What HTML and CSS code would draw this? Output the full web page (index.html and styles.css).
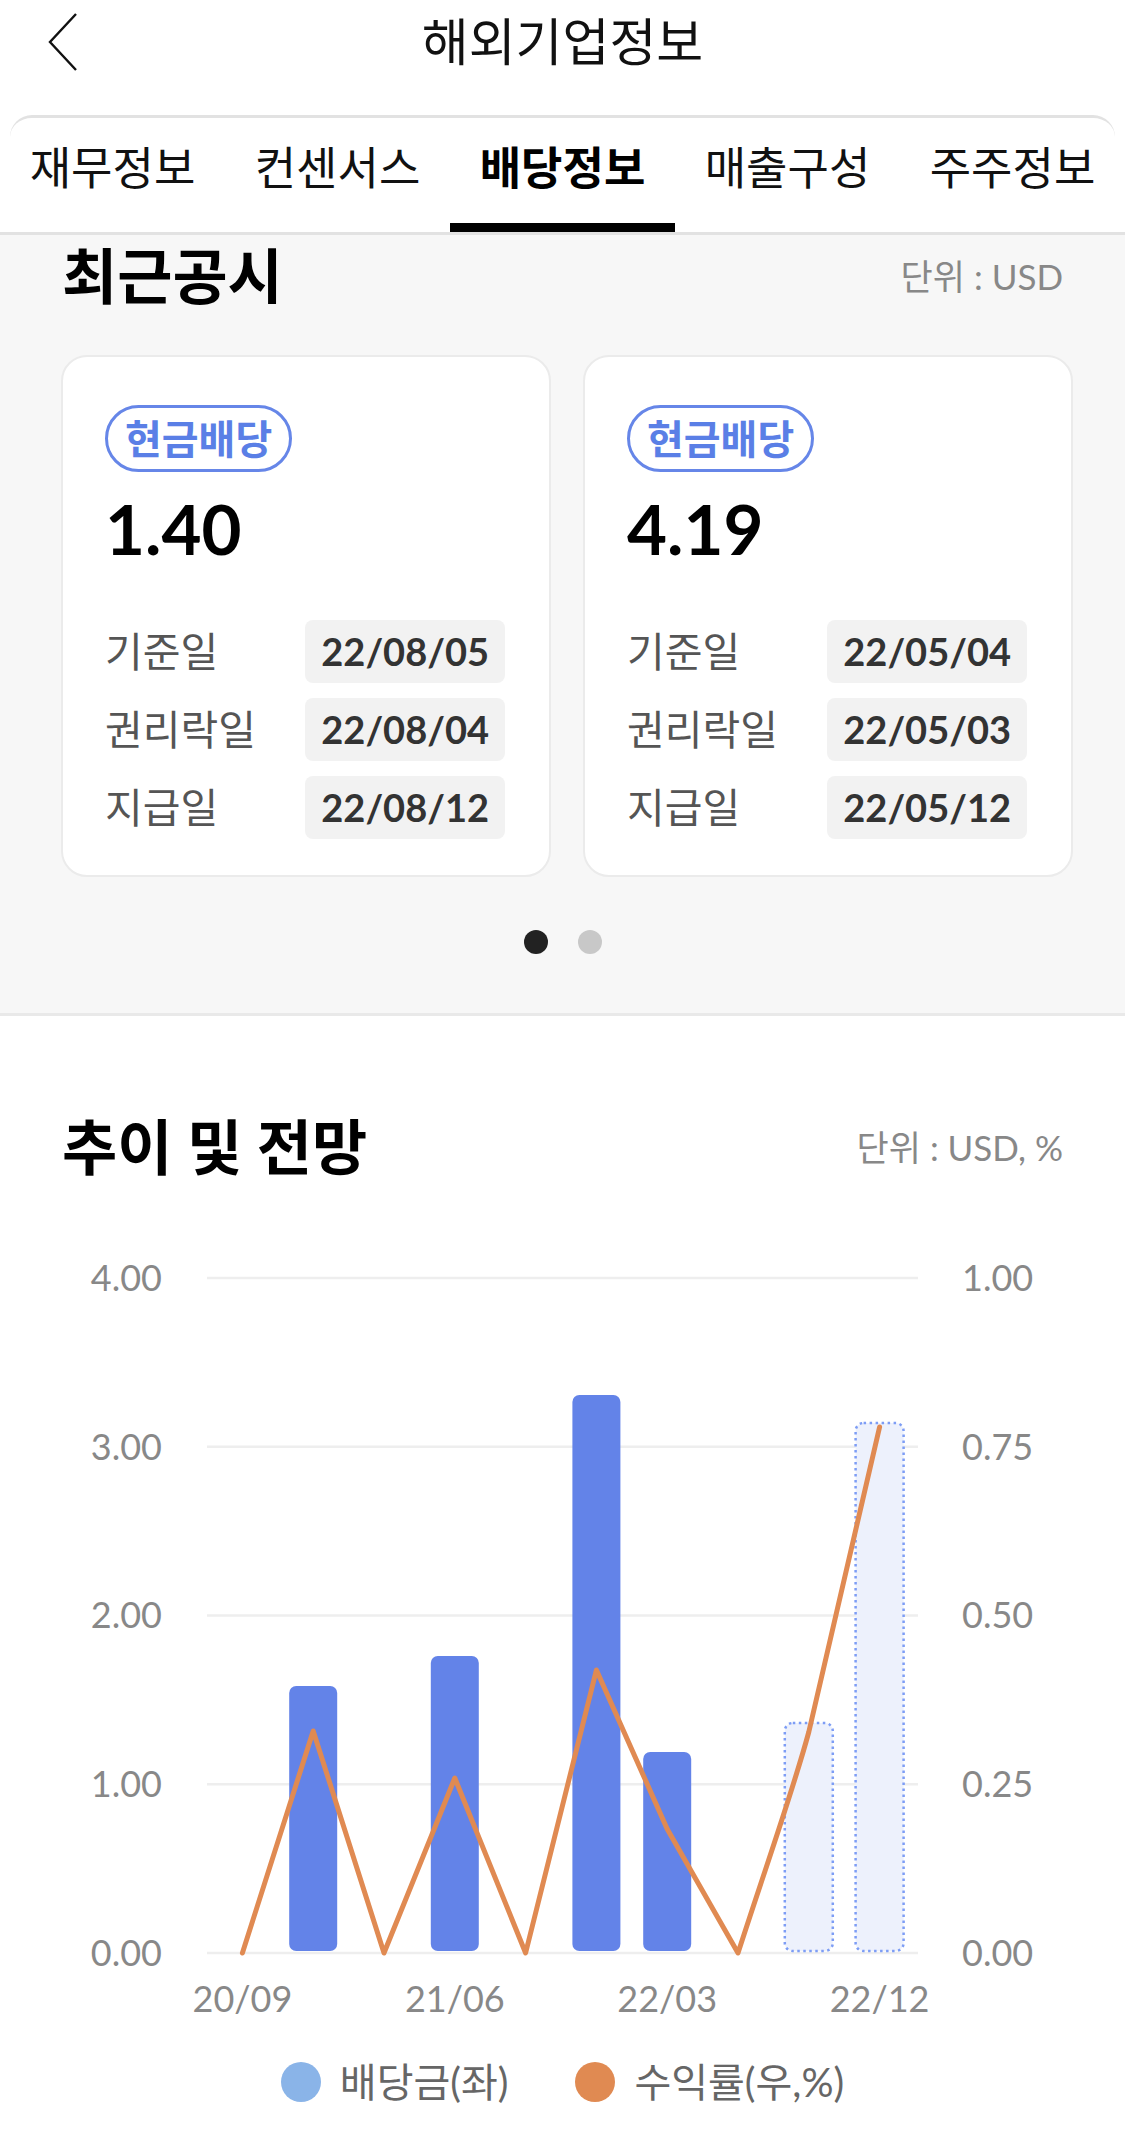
FILE: index.html
```html
<!DOCTYPE html>
<html lang="ko">
<head>
    <meta charset="UTF-8">
    <meta name="viewport" content="width=device-width, initial-scale=1.0">
    <title>해외기업정보</title>
    <link rel="stylesheet" href="styles.css">
</head>
<body>
    <header class="topbar">
        <button class="back" aria-label="뒤로">
            <svg width="30" height="58" viewBox="0 0 30 58"><path d="M28 1 L2 29 L28 57" fill="none" stroke="#111" stroke-width="2.4"/></svg>
        </button>
        <h1 class="topbar-title">해외기업정보</h1>
        <span></span>
    </header>

    <nav class="tabs">
        <a class="tab">재무정보</a>
        <a class="tab">컨센서스</a>
        <a class="tab active">배당정보</a>
        <a class="tab">매출구성</a>
        <a class="tab">주주정보</a>
    </nav>

    <section class="notice">
        <div class="section-head">
            <h2>최근공시</h2>
            <span class="unit">단위 : USD</span>
        </div>

        <div class="cards">
            <article class="card">
                <span class="badge">현금배당</span>
                <p class="amount">1.40</p>
                <dl class="dates">
                    <div class="date-row"><dt>기준일</dt><dd>22/08/05</dd></div>
                    <div class="date-row"><dt>권리락일</dt><dd>22/08/04</dd></div>
                    <div class="date-row"><dt>지급일</dt><dd>22/08/12</dd></div>
                </dl>
            </article>
            <article class="card">
                <span class="badge">현금배당</span>
                <p class="amount">4.19</p>
                <dl class="dates">
                    <div class="date-row"><dt>기준일</dt><dd>22/05/04</dd></div>
                    <div class="date-row"><dt>권리락일</dt><dd>22/05/03</dd></div>
                    <div class="date-row"><dt>지급일</dt><dd>22/05/12</dd></div>
                </dl>
            </article>
        </div>

        <div class="dots">
            <span class="dot active"></span>
            <span class="dot"></span>
        </div>
    </section>

    <section class="trend">
        <div class="section-head">
            <h2>추이 및 전망</h2>
            <span class="unit">단위 : USD, %</span>
        </div>

        <svg class="chart" width="1125" height="780" viewBox="0 0 1125 780">
            <!-- grid -->
            <g class="grid">
                <line x1="207" x2="918" y1="39" y2="39"/>
                <line x1="207" x2="918" y1="207.75" y2="207.75"/>
                <line x1="207" x2="918" y1="376.5" y2="376.5"/>
                <line x1="207" x2="918" y1="545.25" y2="545.25"/>
                <line x1="207" x2="918" y1="714" y2="714"/>
            </g>

            <!-- left axis (USD) -->
            <g class="axis" text-anchor="end">
                <text x="162" y="52">4.00</text>
                <text x="162" y="221">3.00</text>
                <text x="162" y="389">2.00</text>
                <text x="162" y="558">1.00</text>
                <text x="162" y="727">0.00</text>
            </g>

            <!-- right axis (%) -->
            <g class="axis" text-anchor="start">
                <text x="962" y="52">1.00</text>
                <text x="962" y="221">0.75</text>
                <text x="962" y="389">0.50</text>
                <text x="962" y="558">0.25</text>
                <text x="962" y="727">0.00</text>
            </g>

            <!-- dividends -->
            <g class="bars">
                <rect x="289.2" y="447" width="48" height="265" rx="7"/>
                <rect x="430.8" y="417" width="48" height="295" rx="7"/>
                <rect x="572.4" y="156" width="48" height="556" rx="7"/>
                <rect x="643.2" y="513" width="48" height="199" rx="7"/>
            </g>
            <g class="bars-estimate">
                <rect x="784.8" y="484" width="48" height="228" rx="8"/>
                <rect x="855.6" y="184" width="48" height="528" rx="8"/>
            </g>

            <!-- yield -->
            <path class="yield" d="M242.4 714 L313.2 492 L384 714 L454.8 539 L525.6 714 L596.4 431 L667.2 590 L738 714 C765 630 792 555 808.8 493 L879.6 188"/>

            <!-- x axis -->
            <g class="axis" text-anchor="middle">
                <text x="242.4" y="773">20/09</text>
                <text x="454.8" y="773">21/06</text>
                <text x="667.2" y="773">22/03</text>
                <text x="879.6" y="773">22/12</text>
            </g>
        </svg>

        <div class="legend">
            <div class="legend-item"><span class="legend-dot blue"></span>배당금(좌)</div>
            <div class="legend-item"><span class="legend-dot orange"></span>수익률(우,%)</div>
        </div>
    </section>
</body>
</html>
```

FILE: styles.css
```css
body {
    margin: 0;
    width: 1125px;
    font-family: Lato, "Noto Sans CJK KR", sans-serif;
    color: #111;
    background-color: #fff;
}

/* top bar */
.topbar {
    display: grid;
    grid-template-columns: 1fr auto 1fr;
    align-items: center;
    height: 84px;
}
.back {
    justify-self: start;
    display: flex;
    margin-left: 48px;
    padding: 0;
    border: none;
    background: none;
}
.topbar-title {
    margin: 0;
    font-size: 51px;
    font-weight: 400;
    line-height: 1.2;
}

/* tabs */
.tabs {
    position: relative;
    display: grid;
    grid-template-columns: repeat(5, 1fr);
    margin-top: 31px;
    padding-top: 3px;
    border-bottom: 3px solid #e2e2e2;
}
.tabs::before {
    content: "";
    position: absolute;
    top: 0;
    left: 10px;
    right: 10px;
    height: 24px;
    border-top: 3px solid #e2e2e2;
    border-radius: 22px 22px 0 0;
}
.tab {
    position: relative;
    display: flex;
    align-items: center;
    justify-content: center;
    height: 114px;
    padding-bottom: 15px;
    box-sizing: border-box;
    font-size: 45px;
    line-height: 1.2;
    color: #111;
}
.tab.active {
    font-weight: 700;
    color: #000;
}
.tab.active::after {
    content: "";
    position: absolute;
    left: 0;
    right: 0;
    bottom: 0;
    height: 9px;
    background-color: #000;
}

/* section header */
.section-head {
    display: flex;
    justify-content: space-between;
    align-items: center;
    padding: 0 62px;
}
.section-head h2 {
    margin: 0;
    font-size: 60px;
    font-weight: 700;
    line-height: 1.2;
    color: #000;
}
.unit {
    font-size: 35px;
    line-height: 1.2;
    color: #888;
}

/* recent notices */
.notice {
    padding: 5px 0 59px;
    background-color: #f7f7f7;
    border-bottom: 3px solid #e9e9e9;
    overflow: hidden;
}
.cards {
    display: flex;
    gap: 32px;
    margin-top: 43px;
    padding-left: 61px;
}
.card {
    flex: 0 0 490px;
    box-sizing: border-box;
    padding: 48px 44px 36px 42px;
    background-color: #fff;
    border: 2px solid #ebebeb;
    border-radius: 26px;
}
.badge {
    display: flex;
    align-items: center;
    width: max-content;
    height: 67px;
    box-sizing: border-box;
    padding: 0 17px;
    border: 3px solid #6686e8;
    border-radius: 34px;
    font-size: 40px;
    font-weight: 700;
    line-height: 1.2;
    color: #5a7fe6;
}
.amount {
    margin: 22px 0 0;
    font-size: 69px;
    font-weight: 700;
    line-height: 1;
    color: #000;
}
.dates {
    display: flex;
    flex-direction: column;
    gap: 15px;
    margin: 57px 0 0;
}
.date-row {
    display: flex;
    justify-content: space-between;
    align-items: center;
}
.date-row dt {
    font-size: 41px;
    line-height: 1.2;
    color: #555;
}
.date-row dd {
    display: flex;
    align-items: center;
    height: 63px;
    margin: 0;
    padding: 0 16px;
    background-color: #f2f2f2;
    border-radius: 8px;
    font-size: 38px;
    font-weight: 700;
    line-height: 1.2;
    color: #333;
}
.dots {
    display: flex;
    justify-content: center;
    gap: 30px;
    margin-top: 53px;
}
.dot {
    width: 24px;
    height: 24px;
    border-radius: 50%;
    background-color: #c8c8c8;
}
.dot.active {
    background-color: #222;
}

/* trend chart */
.trend {
    padding: 95px 0 44px;
}
.chart {
    display: block;
    margin-top: 56px;
}
.chart .grid line {
    stroke: #eeeeee;
    stroke-width: 2.5;
}
.chart .axis text {
    font-family: Lato, sans-serif;
    font-size: 36px;
    fill: #888;
}
.chart .bars rect {
    fill: #6383e8;
}
.chart .bars-estimate rect {
    fill: #edf1fc;
    stroke: #7d9df5;
    stroke-width: 2.5;
    stroke-dasharray: 2.5 3.5;
}
.chart .yield {
    fill: none;
    stroke: #e08a52;
    stroke-width: 5;
    stroke-linejoin: round;
    stroke-linecap: round;
}
.legend {
    display: flex;
    justify-content: center;
    gap: 67px;
    margin-top: 39px;
}
.legend-item {
    display: flex;
    align-items: center;
    gap: 19px;
    font-size: 40px;
    line-height: 1.2;
    color: #666;
}
.legend-dot {
    width: 40px;
    height: 40px;
    border-radius: 50%;
}
.legend-dot.blue {
    background-color: #8ab4e8;
}
.legend-dot.orange {
    background-color: #e08a52;
}
```
